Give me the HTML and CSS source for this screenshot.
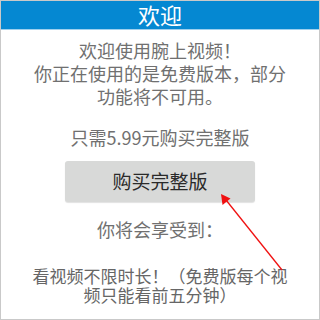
FILE: index.html
```html
<!DOCTYPE HTML><html>
<head>
  <title>欢迎</title>
  <meta name="viewport" content="width=device-width, initial-scale=1">
  <link rel="stylesheet" href="styles.css">
</head>
<body>
  <div class="page">
    <div class="topnav">
      <h1>欢迎</h1>
    </div>
    <div class="content">
      <p class="intro">欢迎使用腕上视频！<br>你正在使用的是免费版本，部分<br>功能将不可用。</p>
      <p class="price">只需5.99元购买完整版</p>
      <button class="button">购买完整版</button>
      <p class="enjoy">你将会享受到：</p>
      <p class="perk">看视频不限时长！（免费版每个视<br>频只能看前五分钟）</p>
    </div>
    <svg class="arrow" width="320" height="320" viewBox="0 0 320 320">
      <line x1="282" y1="270" x2="226" y2="200" stroke="#f01010" stroke-width="1.3"/>
      <polygon points="221,194 222.5,205 230.5,198.5" fill="#f01010"/>
    </svg>
  </div>
</body>
</html>
```

FILE: styles.css
```css
html {
  font-family: "Noto Sans CJK SC", "Noto Sans", sans-serif;
  text-align: center;
}
body {
  margin: 0;
}
.page {
  position: relative;
  width: 320px;
  height: 320px;
  box-sizing: border-box;
  border: 1px solid #c9c9c9;
  overflow: hidden;
  background-color: #fff;
}
.topnav {
  background-color: #0588d2;
  height: 28px;
  border-bottom: 1px solid #9fd0ee;
}
h1 {
  margin: 0;
  font-size: 22px;
  font-weight: normal;
  line-height: 27px;
  color: white;
}
.content {
  display: flex;
  flex-direction: column;
  align-items: center;
  color: #707070;
}
p {
  margin: 0;
}
.intro {
  margin-top: 9px;
  font-size: 18px;
  line-height: 23px;
}
.price {
  margin-top: 18px;
  font-size: 18px;
  line-height: 23px;
}
.button {
  margin-top: 12px;
  width: 190px;
  height: 41px;
  padding: 0 0 2px 0;
  font-family: inherit;
  font-size: 19px;
  color: #2a2a2a;
  background-color: #d8d9d8;
  border: none;
  border-radius: 3px;
  box-shadow: 0 1px 1px rgba(0,0,0,.12);
}
.enjoy {
  margin-top: 16px;
  font-size: 18px;
  line-height: 23px;
}
.perk {
  margin-top: 25px;
  font-size: 17px;
  line-height: 19px;
  color: #666;
}
.arrow {
  position: absolute;
  left: -1px;
  top: -1px;
}
```
